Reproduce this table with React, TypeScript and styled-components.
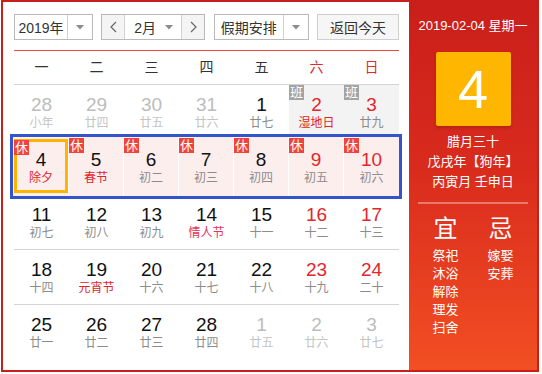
import React from "react";
import styled, { createGlobalStyle } from "styled-components";

const GlobalStyle = createGlobalStyle`
  body {
    margin: 0;
    background: #fff;
    font-family: "Liberation Sans", "Noto Sans CJK SC", sans-serif;
  }
`;

type Day = {
  n: number;
  l: string;
  faded?: boolean;
  fest?: "red" | "pink";
  badge?: "休" | "班";
  today?: boolean;
};

const weeks: { pad: number; h: number; holiday?: boolean; line?: boolean; days: Day[] }[] = [
  {
    pad: 10,
    h: 49,
    days: [
      { n: 28, l: "小年", faded: true },
      { n: 29, l: "廿四", faded: true },
      { n: 30, l: "廿五", faded: true },
      { n: 31, l: "廿六", faded: true },
      { n: 1, l: "廿七" },
      { n: 2, l: "湿地日", fest: "red", badge: "班" },
      { n: 3, l: "廿九", badge: "班" },
    ],
  },
  {
    pad: 10,
    h: 65,
    holiday: true,
    days: [
      { n: 4, l: "除夕", fest: "red", badge: "休", today: true },
      { n: 5, l: "春节", fest: "red", badge: "休" },
      { n: 6, l: "初二", badge: "休" },
      { n: 7, l: "初三", badge: "休" },
      { n: 8, l: "初四", badge: "休" },
      { n: 9, l: "初五", badge: "休" },
      { n: 10, l: "初六", badge: "休" },
    ],
  },
  {
    pad: 6,
    h: 51,
    line: true,
    days: [
      { n: 11, l: "初七" },
      { n: 12, l: "初八" },
      { n: 13, l: "初九" },
      { n: 14, l: "情人节", fest: "pink" },
      { n: 15, l: "十一" },
      { n: 16, l: "十二" },
      { n: 17, l: "十三" },
    ],
  },
  {
    pad: 10,
    h: 55,
    line: true,
    days: [
      { n: 18, l: "十四" },
      { n: 19, l: "元宵节", fest: "red" },
      { n: 20, l: "十六" },
      { n: 21, l: "十七" },
      { n: 22, l: "十八" },
      { n: 23, l: "十九" },
      { n: 24, l: "二十" },
    ],
  },
  {
    pad: 10,
    h: 55,
    days: [
      { n: 25, l: "廿一" },
      { n: 26, l: "廿二" },
      { n: 27, l: "廿三" },
      { n: 28, l: "廿四" },
      { n: 1, l: "廿五", faded: true },
      { n: 2, l: "廿六", faded: true },
      { n: 3, l: "廿七", faded: true },
    ],
  },
];

const weekNames = ["一", "二", "三", "四", "五", "六", "日"];

function Caret() {
  return (
    <svg width="8" height="5" viewBox="0 0 8 5">
      <polygon points="0,0 8,0 4,4.5" fill="#8a8a8a" />
    </svg>
  );
}

function Chevron({ dir }: { dir: "l" | "r" }) {
  return (
    <svg width="7" height="12" viewBox="0 0 7 12">
      <polyline
        points={dir === "l" ? "6,1 1,6 6,11" : "1,1 6,6 1,11"}
        fill="none"
        stroke="#666"
        strokeWidth="1.2"
      />
    </svg>
  );
}

export default function App() {
  return (
    <>
      <GlobalStyle />
      <Widget>
        <Main>
          <Toolbar>
            <Select $w={79}>
              <SelectText>2019年</SelectText>
              <SelectArrow>
                <Caret />
              </SelectArrow>
            </Select>
            <Group>
              <StepButton>
                <Chevron dir="l" />
              </StepButton>
              <MonthSelect>
                <span>2月</span>
                <Caret />
              </MonthSelect>
              <StepButton>
                <Chevron dir="r" />
              </StepButton>
            </Group>
            <Select $w={95}>
              <SelectText>假期安排</SelectText>
              <SelectArrow>
                <Caret />
              </SelectArrow>
            </Select>
            <TodayButton>返回今天</TodayButton>
          </Toolbar>

          <WeekHeader>
            {weekNames.map((w, i) => (
              <WeekName key={w} $weekend={i >= 5}>
                {w}
              </WeekName>
            ))}
          </WeekHeader>

          {weeks.map((wk, wi) => (
            <Row key={wi} $h={wk.h} $holiday={wk.holiday} $line={wk.line}>
              {wk.days.map((d, di) => (
                <Cell
                  key={di}
                  $pad={wk.holiday ? 13 : wk.pad}
                  $work={d.badge === "班"}
                  $holiday={wk.holiday}
                  $today={d.today}
                  $last={di === 6}
                >
                  {d.badge && <Badge $work={d.badge === "班"}>{d.badge}</Badge>}
                  <DayNum $faded={d.faded} $weekend={di >= 5}>
                    {d.n}
                  </DayNum>
                  <Lunar $faded={d.faded} $fest={d.fest}>
                    {d.l}
                  </Lunar>
                </Cell>
              ))}
            </Row>
          ))}
        </Main>

        <Side>
          <DateLine>2019-02-04 星期一</DateLine>
          <BigDay>4</BigDay>
          <LunarInfo>
            <div>腊月三十</div>
            <div>戊戌年【狗年】</div>
            <div>丙寅月 壬申日</div>
          </LunarInfo>
          <Divider />
          <Almanac>
            <AlmanacCol>
              <AlmanacHead>宜</AlmanacHead>
              {["祭祀", "沐浴", "解除", "理发", "扫舍"].map((t) => (
                <AlmanacItem key={t}>{t}</AlmanacItem>
              ))}
            </AlmanacCol>
            <AlmanacCol>
              <AlmanacHead>忌</AlmanacHead>
              {["嫁娶", "安葬"].map((t) => (
                <AlmanacItem key={t}>{t}</AlmanacItem>
              ))}
            </AlmanacCol>
          </Almanac>
        </Side>
      </Widget>
    </>
  );
}

const Widget = styled.div`
  box-sizing: border-box;
  width: 538px;
  height: 372px;
  margin-left: 1px;
  border: 2px solid #c91f1b;
  display: flex;
  overflow: hidden;
`;

const Main = styled.div`
  width: 406px;
  box-sizing: border-box;
  padding: 12px 10px 0 11px;
  display: flex;
  flex-direction: column;
`;

const Toolbar = styled.div`
  display: flex;
  justify-content: space-between;
  padding-bottom: 10px;
  border-bottom: 1px solid #ea4a3e;
`;

const Select = styled.div<{ $w: number }>`
  box-sizing: border-box;
  width: ${(p) => p.$w}px;
  height: 26px;
  border: 1px solid #b9b9b9;
  display: flex;
  background: #fff;
`;

const SelectText = styled.div`
  flex: 1;
  display: flex;
  align-items: center;
  justify-content: center;
  font-size: 14px;
  color: #333;
`;

const SelectArrow = styled.div`
  width: 24px;
  border-left: 1px solid #d2d2d2;
  display: flex;
  align-items: center;
  justify-content: center;
`;

const Group = styled.div`
  box-sizing: border-box;
  width: 104px;
  height: 26px;
  border: 1px solid #b9b9b9;
  display: flex;
`;

const StepButton = styled.div`
  width: 22px;
  background: #f4f4f4;
  display: flex;
  align-items: center;
  justify-content: center;
`;

const MonthSelect = styled.div`
  flex: 1;
  border-left: 1px solid #d2d2d2;
  border-right: 1px solid #d2d2d2;
  display: flex;
  align-items: center;
  justify-content: space-between;
  padding: 0 8px 0 9px;
  font-size: 14px;
  color: #333;
  background: #fff;
`;

const TodayButton = styled.div`
  box-sizing: border-box;
  width: 82px;
  height: 26px;
  border: 1px solid #cfcfcf;
  background: #f6f6f6;
  display: flex;
  align-items: center;
  justify-content: center;
  font-size: 14px;
  color: #333;
`;

const WeekHeader = styled.div`
  display: grid;
  grid-template-columns: repeat(7, 55px);
  height: 33px;
  border-bottom: 1px solid #d4d4d4;
`;

const WeekName = styled.div<{ $weekend?: boolean }>`
  line-height: 33px;
  text-align: center;
  font-size: 14px;
  color: ${(p) => (p.$weekend ? "#e02b2b" : "#333")};
`;

const Row = styled.div<{ $h: number; $holiday?: boolean; $line?: boolean }>`
  box-sizing: border-box;
  height: ${(p) => p.$h}px;
  display: grid;
  grid-template-columns: repeat(7, 55px);
  border-bottom: ${(p) => (p.$line ? "1px solid #d4d4d4" : "none")};
  ${(p) =>
    p.$holiday &&
    `
    margin: 0 -3px 0 -4px;
    border: 3px solid #3454cc;
    padding-left: 1px;
    background: #fdeeee;
    grid-template-columns: repeat(7, 55px);
  `}
`;

const Cell = styled.div<{
  $pad: number;
  $work?: boolean;
  $holiday?: boolean;
  $today?: boolean;
  $last?: boolean;
}>`
  position: relative;
  box-sizing: border-box;
  display: flex;
  flex-direction: column;
  align-items: center;
  padding-top: ${(p) => p.$pad}px;
  background: ${(p) => (p.$work ? "#f3f3f3" : "transparent")};
  ${(p) => p.$holiday && !p.$last && "border-right: 1px solid #fff;"}
  ${(p) =>
    p.$today &&
    `
    margin: 2px 0 3px;
    padding-top: 11px;
    box-shadow: inset 0 0 0 3px #ffb400;
  `}
`;

const Badge = styled.span<{ $work?: boolean }>`
  position: absolute;
  top: ${(p) => (p.$work ? 0 : 1)}px;
  left: 0;
  width: 15px;
  height: 15px;
  line-height: 15px;
  text-align: center;
  font-size: 13px;
  color: #fff;
  background: ${(p) => (p.$work ? "#a3a3a3" : "#f2433a")};
`;

const DayNum = styled.div<{ $faded?: boolean; $weekend?: boolean }>`
  font-size: 19px;
  line-height: 20px;
  color: ${(p) => (p.$faded ? "#bcbcbc" : p.$weekend ? "#e3262c" : "#111")};
`;

const Lunar = styled.div<{ $faded?: boolean; $fest?: "red" | "pink" }>`
  font-size: 12px;
  line-height: 16px;
  color: ${(p) =>
    p.$fest === "red"
      ? "#e0242a"
      : p.$fest === "pink"
      ? "#e8325a"
      : p.$faded
      ? "#c4c4c4"
      : "#8c8c8c"};
`;

const Side = styled.div`
  flex: 1;
  display: flex;
  flex-direction: column;
  align-items: center;
  padding-top: 14px;
  color: #fff;
  background: linear-gradient(180deg, #ca1e1a 0%, #d92b1d 45%, #f24f23 100%);
`;

const DateLine = styled.div`
  font-size: 13px;
  line-height: 20px;
`;

const BigDay = styled.div`
  margin-top: 16px;
  width: 75px;
  height: 74px;
  background: #ffb600;
  border-radius: 2px;
  box-shadow: 0 2px 3px rgba(120, 20, 0, 0.35);
  display: flex;
  align-items: center;
  justify-content: center;
  font-size: 54px;
  color: #fff;
`;

const LunarInfo = styled.div`
  margin-top: 6px;
  font-size: 13px;
  line-height: 20px;
  text-align: center;
`;

const Divider = styled.div`
  margin-top: 10px;
  width: 110px;
  height: 2px;
  background: rgba(255, 255, 255, 0.35);
`;

const Almanac = styled.div`
  margin-top: 11px;
  display: flex;
  gap: 29px;
`;

const AlmanacCol = styled.div`
  width: 26px;
  display: flex;
  flex-direction: column;
  align-items: center;
`;

const AlmanacHead = styled.div`
  font-size: 24px;
  line-height: 28px;
  margin-bottom: 4px;
`;

const AlmanacItem = styled.div`
  font-size: 13px;
  line-height: 18px;
  white-space: nowrap;
`;
